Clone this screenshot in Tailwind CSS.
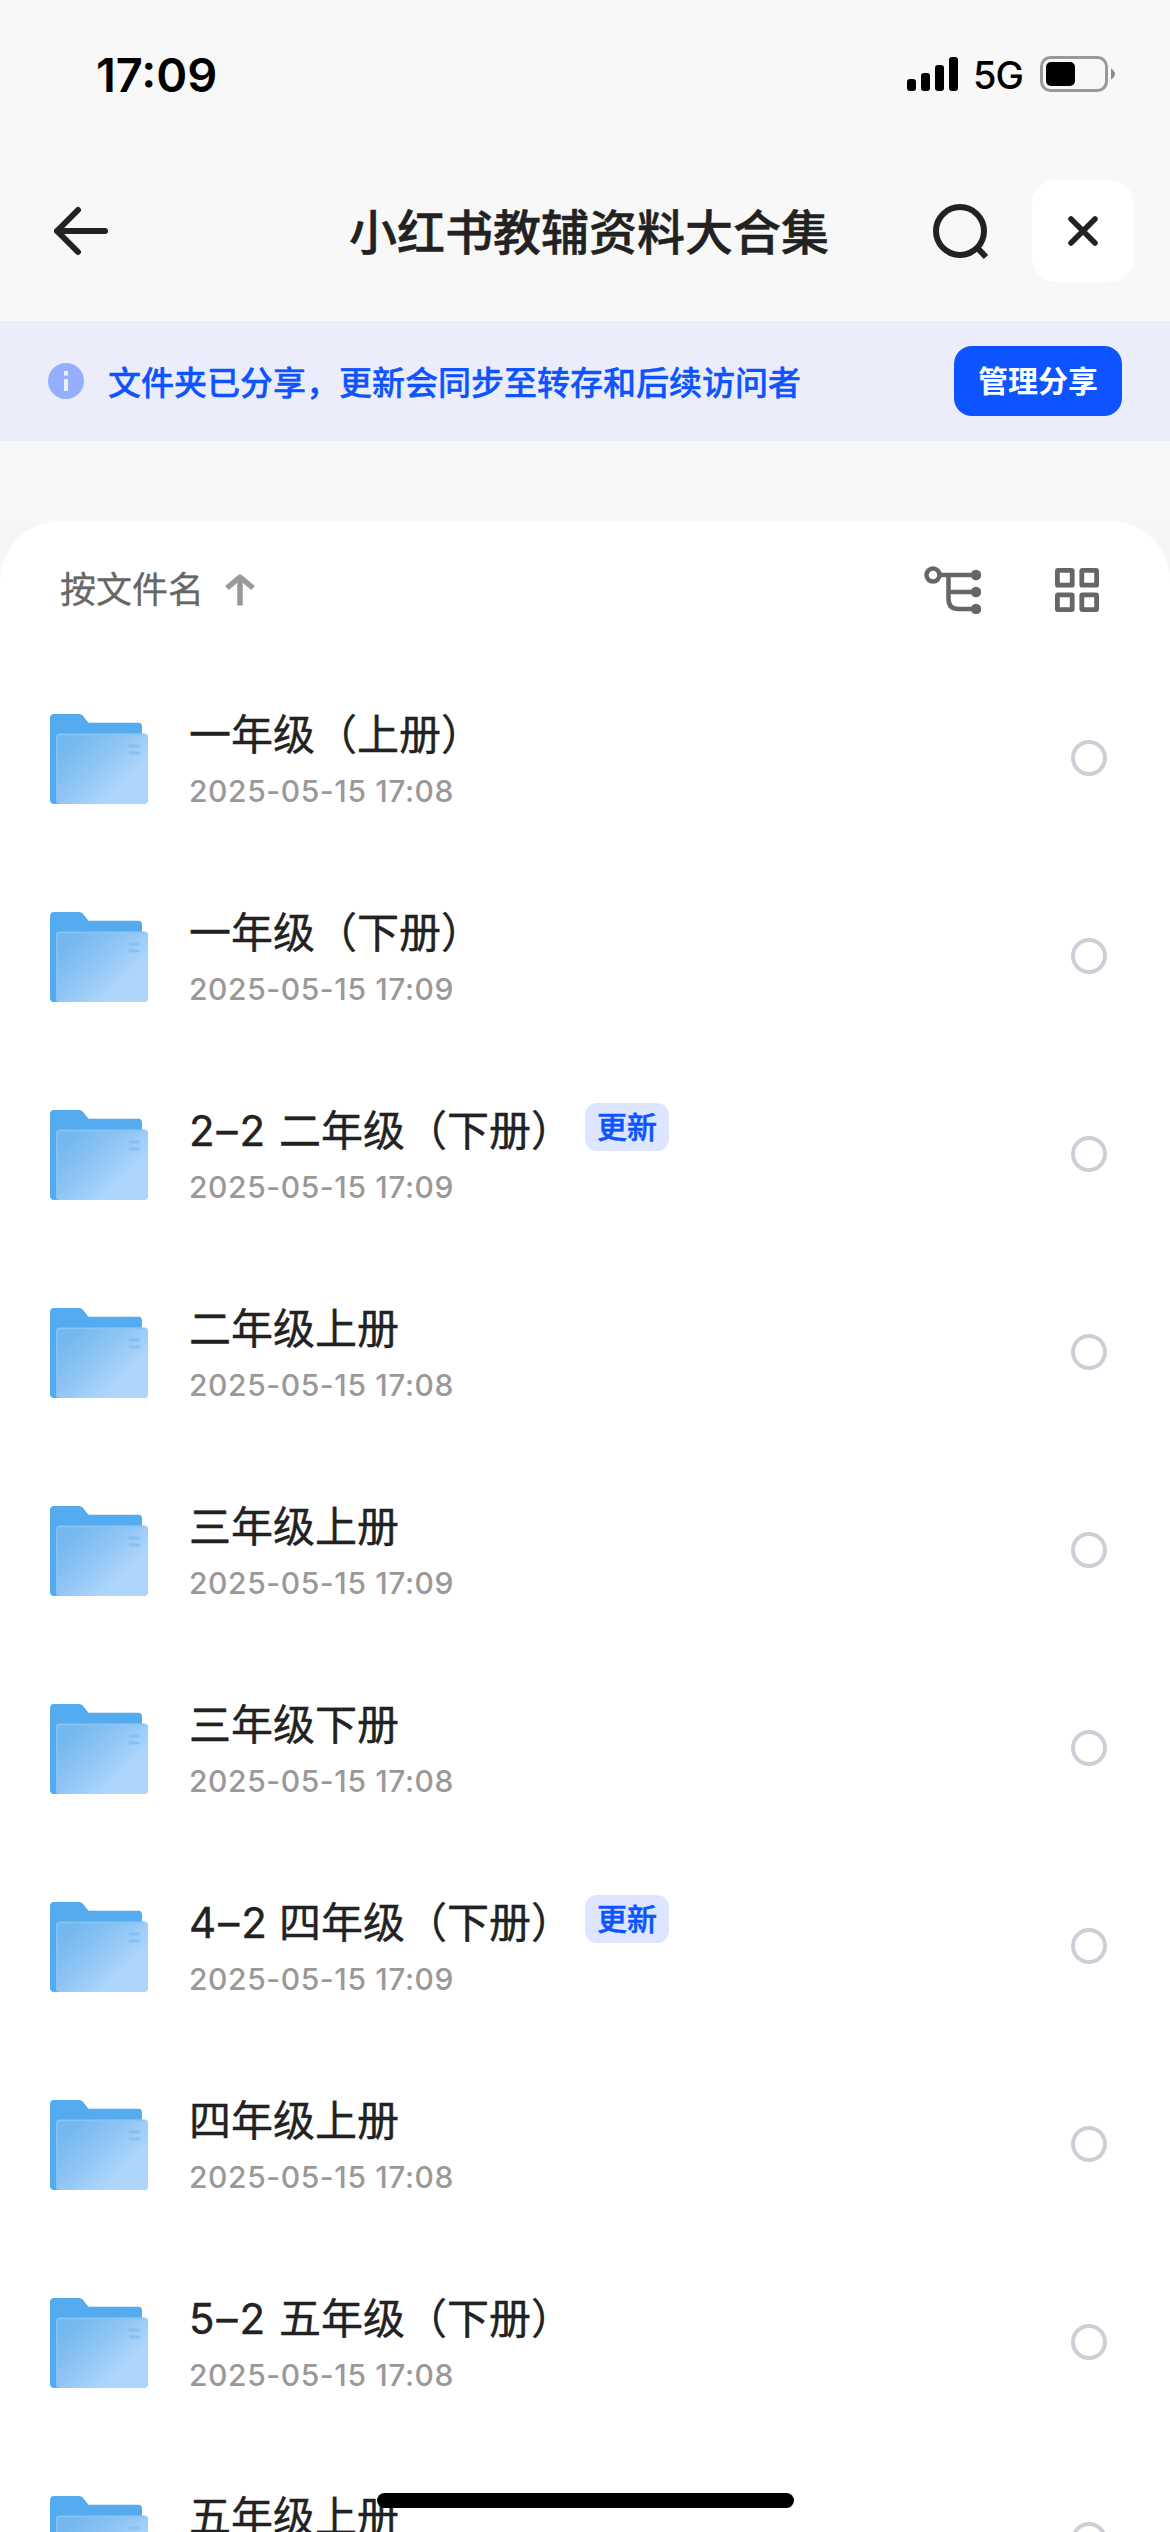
<!DOCTYPE html>
<html lang="zh-CN">
<head>
    <meta charset="UTF-8">
    <meta name="viewport" content="width=device-width, initial-scale=1">
    <title>小红书教辅资料大合集</title>
    <script src="https://cdn.jsdelivr.net/npm/@tailwindcss/browser@4"></script>
</head>
<body class="bg-[#f5f6f8] font-['Inter','Noto_Sans_CJK_SC',sans-serif] text-[#222222]">

    <!-- Shared folder icon -->
    <svg class="absolute w-0 h-0">
        <defs>
            <linearGradient id="folderFront" x1="0" y1="0.1" x2="1" y2="0.9">
                <stop offset="0.1" stop-color="#73b8ef" />
                <stop offset="0.45" stop-color="#91c6f5" />
                <stop offset="0.75" stop-color="#aed6fb" />
            </linearGradient>
        </defs>
        <symbol id="folder" viewBox="0 0 98 90">
            <path fill="#55abef" d="M4 0H29.500Q31.500 0 32.700 1.600L38.500 8.700H88.500Q92 8.700 92 12.500V60H12V90H4Q0 90 0 86V4Q0 0 4 0Z" />
            <rect x="6" y="19.500" width="92" height="70.500" rx="3.500" fill="url(#folderFront)" />
            <path d="M7 89V23Q7 20.500 10 20.500H94" fill="none" stroke="#8ac4f3" stroke-width="1.500" />
            <path d="M79 32H89.500M79 39H89.500" stroke="#86c0f3" stroke-width="3" />
        </symbol>
    </svg>

    <div class="relative flex flex-col w-[1170px] h-[2532px] overflow-hidden">

        <!-- Status bar -->
        <div class="flex shrink-0 items-center justify-between h-[141px] bg-[#f8f8f8] pl-24 pr-[54px] pt-[7px] text-black">
            <span class="text-[47px] leading-none font-semibold">17:09</span>
            <div class="flex items-center">
                <svg class="w-[52px] h-9" viewBox="0 0 52 36">
                    <rect x="0" y="23" width="9" height="12" rx="3" />
                    <rect x="14" y="17" width="9" height="18" rx="3" />
                    <rect x="28" y="9" width="9" height="26" rx="3" />
                    <rect x="42" y="1" width="9" height="34" rx="3" />
                </svg>
                <span class="ml-[14px] w-[67px] pt-0.5 text-[38px] leading-none font-medium tracking-tight">5G</span>
                <svg class="w-[76px] h-9" viewBox="0 0 76 36">
                    <rect x="1.500" y="1.500" width="65" height="33" rx="9" fill="none" stroke="#999999" stroke-width="3" />
                    <rect x="6" y="6" width="29" height="24" rx="5" />
                    <path d="M71 12.500Q75 15 75 18T71 23.500Z" fill="#8e8e8e" />
                </svg>
            </div>
        </div>

        <!-- Navigation bar -->
        <div class="flex shrink-0 items-center h-[180px] bg-[#f8f8f8] pl-[54px] pr-9">
            <svg class="w-[54px] h-[54px]" viewBox="0 0 54 54" fill="none" stroke="#222222" stroke-width="6" stroke-linecap="round" stroke-linejoin="round">
                <path d="M51 27H3M24 6L3 27L24 48" />
            </svg>
            <h1 class="ml-[241px] flex-1 pt-[3px] text-[48px] leading-none font-medium whitespace-nowrap [-webkit-text-stroke:0.5px]">小红书教辅资料大合集</h1>
            <svg class="w-15 h-15 mr-[39px]" viewBox="0 0 60 60" fill="none" stroke="#222222" stroke-width="6">
                <circle cx="27" cy="30" r="24" />
                <path d="M43.500 46L53 56" />
            </svg>
            <button class="flex items-center justify-center w-[102px] h-[102px] rounded-3xl bg-white">
                <svg class="w-[30px] h-[30px]" viewBox="0 0 30 30" stroke="#222222" stroke-width="5.500" stroke-linecap="round">
                    <path d="M3 3L27 27M27 3L3 27" />
                </svg>
            </button>
        </div>

        <!-- Share notice -->
        <div class="flex shrink-0 items-center h-[120px] bg-[#ebeefa] px-12 text-[#0d53ff]">
            <svg class="w-9 h-9" viewBox="0 0 36 36">
                <circle cx="18" cy="18" r="18" fill="#94b0fd" />
                <path d="M16 8H20V12.500H16ZM16 16H20V28H16Z" fill="#ebeefa" />
            </svg>
            <p class="ml-6 flex-1 pt-1 text-[33px] leading-none font-medium [-webkit-text-stroke:0.4px]">文件夹已分享，更新会同步至转存和后续访问者</p>
            <button class="w-[168px] h-[70px] rounded-[18px] bg-[#0d53ff] text-white text-[30px] leading-none font-bold">管理分享</button>
        </div>

        <div class="h-20 shrink-0 bg-[#f8f8f8]"></div>

        <div class="flex-1 rounded-t-[60px] bg-white">
            <!-- Sort and view options -->
            <div class="flex items-center h-[138px] pl-15 pr-[71px] text-[#666666]">
                <span class="text-[36px] leading-none [-webkit-text-stroke:0.3px]">按文件名</span>
                <svg class="ml-[21px] w-[30px] h-8" viewBox="0 0 30 32" fill="none" stroke="#999999" stroke-width="5.500">
                    <path d="M15 31.500V4M2 14L15 3L28 14" stroke-linejoin="round" />
                </svg>
                <svg class="ml-auto w-[57px] h-12" viewBox="0 0 57 48" fill="none" stroke="#666666" stroke-width="4.500">
                    <circle cx="9" cy="9" r="6.500" />
                    <path d="M16 9H52M24.500 9V33Q24.500 43 34.500 43H52M24.500 26H52" />
                    <g fill="#666666" stroke="none">
                        <circle cx="52" cy="9" r="5.200" />
                        <circle cx="52" cy="26" r="5.200" />
                        <circle cx="52" cy="43" r="5.200" />
                    </g>
                </svg>
                <svg class="ml-[74px] w-11 h-11" viewBox="0 0 44 44" fill="none" stroke="#666666" stroke-width="4.800">
                    <rect x="2.400" y="2.400" width="14.800" height="14.800" rx="0.500" />
                    <rect x="26.800" y="2.400" width="14.800" height="14.800" rx="0.500" />
                    <rect x="2.400" y="26.800" width="14.800" height="14.800" rx="0.500" />
                    <rect x="26.800" y="26.800" width="14.800" height="14.800" rx="0.500" />
                </svg>
            </div>

            <div id="files">
                <!-- Folder rows will be injected here -->
            </div>
        </div>

        <!-- Home indicator -->
        <div class="absolute left-[377px] top-[2493px] w-[417px] h-[15px] rounded-full bg-black"></div>
    </div>

    <script>
        const files = [
            { name: '一年级（上册）', time: '2025-05-15 17:08' },
            { name: '一年级（下册）', time: '2025-05-15 17:09' },
            { prefix: '2–2', name: '二年级（下册）', time: '2025-05-15 17:09', updated: true },
            { name: '二年级上册', time: '2025-05-15 17:08' },
            { name: '三年级上册', time: '2025-05-15 17:09' },
            { name: '三年级下册', time: '2025-05-15 17:08' },
            { prefix: '4–2', name: '四年级（下册）', time: '2025-05-15 17:09', updated: true },
            { name: '四年级上册', time: '2025-05-15 17:08' },
            { prefix: '5–2', name: '五年级（下册）', time: '2025-05-15 17:08' },
            { name: '五年级上册', time: '2025-05-15 17:09' }
        ];

        const list = document.getElementById('files');
        files.forEach(file => {
            const row = document.createElement('div');
            row.className = 'flex items-center h-[198px] pl-[50px] pr-[63px]';
            const prefix = file.prefix
                ? `<span class="inline-block w-[90px] tracking-[2px]">${file.prefix} </span>`
                : '';
            const badge = file.updated
                ? '<span class="flex items-center justify-center ml-3 mb-[7px] w-[84px] h-12 rounded-xl bg-[#dde5ff] text-[30px] leading-none font-medium text-[#0d53ff] [-webkit-text-stroke:0.5px]">更新</span>'
                : '';
            row.innerHTML = `
                <svg class="mt-0.5 w-[98px] h-[90px]"><use href="#folder" /></svg>
                <div class="ml-[41px] flex-1 pt-0.5">
                    <div class="flex items-center h-[57px]">
                        <span class="pt-px text-[42px] leading-none whitespace-nowrap [-webkit-text-stroke:0.4px]">${prefix}${file.name}</span>${badge}
                    </div>
                    <div class="mt-[7px] text-[30px] leading-[42px] font-medium tracking-[0.6px] text-[#999999]">${file.time}</div>
                </div>
                <span class="w-9 h-9 rounded-full border-4 border-[#cfced6]"></span>
            `;
            list.appendChild(row);
        });
    </script>

</body>
</html>
